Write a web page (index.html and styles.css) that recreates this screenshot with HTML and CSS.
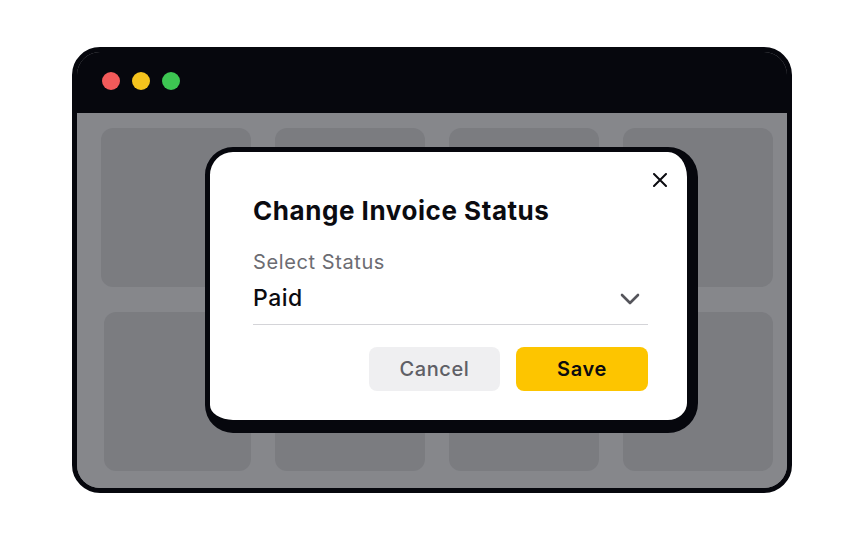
FILE: index.html
```html
<!DOCTYPE html>
<html>
<head>
<meta charset="utf-8">
<link rel="stylesheet" href="styles.css">
</head>
<body>
<div class="window">
  <div class="titlebar">
    <span class="dot red"></span>
    <span class="dot yellow"></span>
    <span class="dot green"></span>
  </div>
  <div class="content">
    <div class="grid">
      <div class="card"></div>
      <div class="card"></div>
      <div class="card"></div>
      <div class="card"></div>
      <div class="card"></div>
      <div class="card"></div>
      <div class="card"></div>
      <div class="card"></div>
    </div>
    <div class="modal">
      <button class="close" aria-label="Close">
        <svg width="14" height="14" viewBox="0 0 14 14"><path d="M1 1L13 13M13 1L1 13" stroke="#0b0b10" stroke-width="2" stroke-linecap="round"/></svg>
      </button>
      <h2 class="title">Change Invoice Status</h2>
      <div class="label">Select Status</div>
      <div class="select">
        <span class="value">Paid</span>
        <svg class="chev" width="20" height="12" viewBox="0 0 20 12"><path d="M2 2L10 10L18 2" fill="none" stroke="#55555b" stroke-width="2.6" stroke-linecap="round" stroke-linejoin="round"/></svg>
      </div>
      <div class="actions">
        <button class="btn cancel">Cancel</button>
        <button class="btn save">Save</button>
      </div>
    </div>
  </div>
</div>
</body>
</html>
```

FILE: styles.css
```css
* { box-sizing: border-box; }
html, body { margin: 0; padding: 0; background: #ffffff; }
body { font-family: Inter, "Noto Sans", sans-serif; }

.window {
  position: relative;
  margin: 47px 0 0 72px;
  width: 720px;
  height: 446px;
  border: 5px solid #06070d;
  border-radius: 28px;
  overflow: hidden;
  display: flex;
  flex-direction: column;
  background: #86878b;
}

.titlebar {
  height: 61px;
  background: #06070d;
  display: flex;
  align-items: center;
  gap: 12px;
  padding: 0 0 4px 25px;
  flex: none;
}
.dot { width: 18px; height: 18px; border-radius: 50%; display: block; }
.red { background: #f25a5a; }
.yellow { background: #f5c31d; }
.green { background: #3dc652; }

.content {
  flex: 1;
  position: relative;
  background: #86878b;
}
.grid {
  display: grid;
  grid-template-columns: repeat(4, 150px);
  grid-template-rows: 159px 159px;
  column-gap: 24px;
  row-gap: 25px;
  padding: 15px 0 0 24px;
}
.card {
  background: #7b7c80;
  border-radius: 12px;
}
.card:nth-child(5) { margin-left: 3px; }

.modal {
  position: absolute;
  left: 128px;
  top: 34px;
  width: 493px;
  height: 286px;
  background: #ffffff;
  border: 5px solid #06070d;
  border-right-width: 11px;
  border-bottom-width: 13px;
  border-radius: 28px 30px 30px 28px;
  padding: 44px 39px 0 43px;
}
.close {
  position: absolute;
  left: 443px;
  top: 21px;
  width: 14px;
  height: 14px;
  padding: 0;
  border: 0;
  background: none;
  display: block;
}
.close svg { display: block; }
.title {
  margin: 0;
  font-size: 26px;
  line-height: 30px;
  font-weight: 700;
  color: #0b0b10;
  letter-spacing: 0.55px;
}
.label {
  margin-top: 25px;
  font-size: 20px;
  line-height: 22px;
  color: #6c6c72;
  letter-spacing: 0.6px;
}
.select {
  margin-top: 12px;
  height: 40px;
  border-bottom: 1.5px solid #d4d4d8;
  display: flex;
  align-items: flex-start;
  justify-content: space-between;
}
.value {
  font-size: 23px;
  line-height: 26px;
  font-weight: 500;
  color: #0b0b10;
  letter-spacing: 0.5px;
}
.chev { margin: 8px 8px 0 0; display: block; }
.actions {
  margin-top: 22px;
  display: flex;
  justify-content: flex-end;
  gap: 16px;
}
.btn {
  height: 44px;
  border: 0;
  border-radius: 8px;
  font-family: Inter, "Noto Sans", sans-serif;
  font-size: 20px;
  font-weight: 500;
  letter-spacing: 0.6px;
  padding: 0;
}
.cancel { width: 131px; background: #efeff1; color: #5f5f66; }
.save { width: 132px; background: #fdc500; color: #0b0b10; font-weight: 600; }
```
